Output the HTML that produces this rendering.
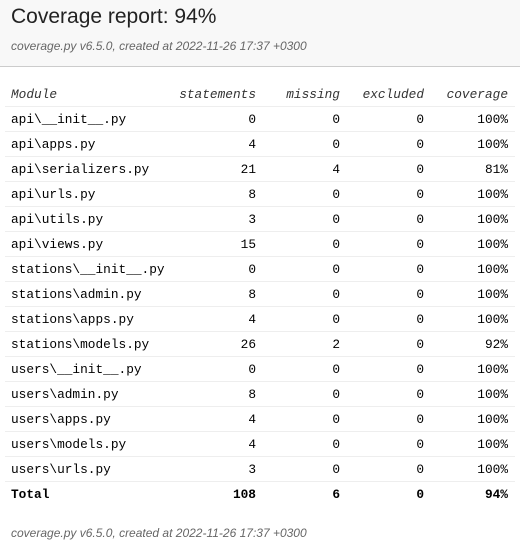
<!DOCTYPE html>
<html><head><meta charset="utf-8"><style>
body{margin:0;width:520px;height:553px;background:#fff;font-family:"Liberation Sans","DejaVu Sans",sans-serif;color:#000;overflow:hidden}
.hd{background:#f8f8f8;height:66px;border-bottom:1px solid #ccc;position:relative}
h1{position:absolute;left:11px;top:5px;margin:0;font-weight:normal;font-size:21px;color:#222}
.sub{position:absolute;left:11px;top:39px;font-size:12px;font-style:italic;color:#666}
table{position:absolute;top:82px;left:5px;width:510px;border-collapse:collapse;table-layout:fixed;font-family:"Liberation Mono",monospace;font-size:12.8px}
td,th{height:24px;padding:0 7px 0 6px;text-align:right;border-bottom:1px solid #eee;white-space:nowrap}
th{font-weight:normal;font-style:italic;color:#333;padding-left:0}
td:first-child,th:first-child{text-align:left;padding-left:6px}
tr.t td{font-weight:bold;border-bottom:none}
.ft{position:absolute;left:11px;top:526px;font-size:12px;font-style:italic;color:#666}
</style></head><body>
<div class="hd"><h1>Coverage report: 94%</h1><div class="sub">coverage.py v6.5.0, created at 2022-11-26 17:37 +0300</div></div>
<table>
<colgroup><col style="width:174px"><col style="width:84px"><col style="width:84px"><col style="width:84px"><col style="width:84px"></colgroup>
<tr><th>Module</th><th>statements</th><th>missing</th><th>excluded</th><th>coverage</th></tr>
<tr><td>api\__init__.py</td><td>0</td><td>0</td><td>0</td><td>100%</td></tr>
<tr><td>api\apps.py</td><td>4</td><td>0</td><td>0</td><td>100%</td></tr>
<tr><td>api\serializers.py</td><td>21</td><td>4</td><td>0</td><td>81%</td></tr>
<tr><td>api\urls.py</td><td>8</td><td>0</td><td>0</td><td>100%</td></tr>
<tr><td>api\utils.py</td><td>3</td><td>0</td><td>0</td><td>100%</td></tr>
<tr><td>api\views.py</td><td>15</td><td>0</td><td>0</td><td>100%</td></tr>
<tr><td>stations\__init__.py</td><td>0</td><td>0</td><td>0</td><td>100%</td></tr>
<tr><td>stations\admin.py</td><td>8</td><td>0</td><td>0</td><td>100%</td></tr>
<tr><td>stations\apps.py</td><td>4</td><td>0</td><td>0</td><td>100%</td></tr>
<tr><td>stations\models.py</td><td>26</td><td>2</td><td>0</td><td>92%</td></tr>
<tr><td>users\__init__.py</td><td>0</td><td>0</td><td>0</td><td>100%</td></tr>
<tr><td>users\admin.py</td><td>8</td><td>0</td><td>0</td><td>100%</td></tr>
<tr><td>users\apps.py</td><td>4</td><td>0</td><td>0</td><td>100%</td></tr>
<tr><td>users\models.py</td><td>4</td><td>0</td><td>0</td><td>100%</td></tr>
<tr><td>users\urls.py</td><td>3</td><td>0</td><td>0</td><td>100%</td></tr>
<tr class="t"><td>Total</td><td>108</td><td>6</td><td>0</td><td>94%</td></tr>
</table>
<div class="ft">coverage.py v6.5.0, created at 2022-11-26 17:37 +0300</div>
</body></html>
